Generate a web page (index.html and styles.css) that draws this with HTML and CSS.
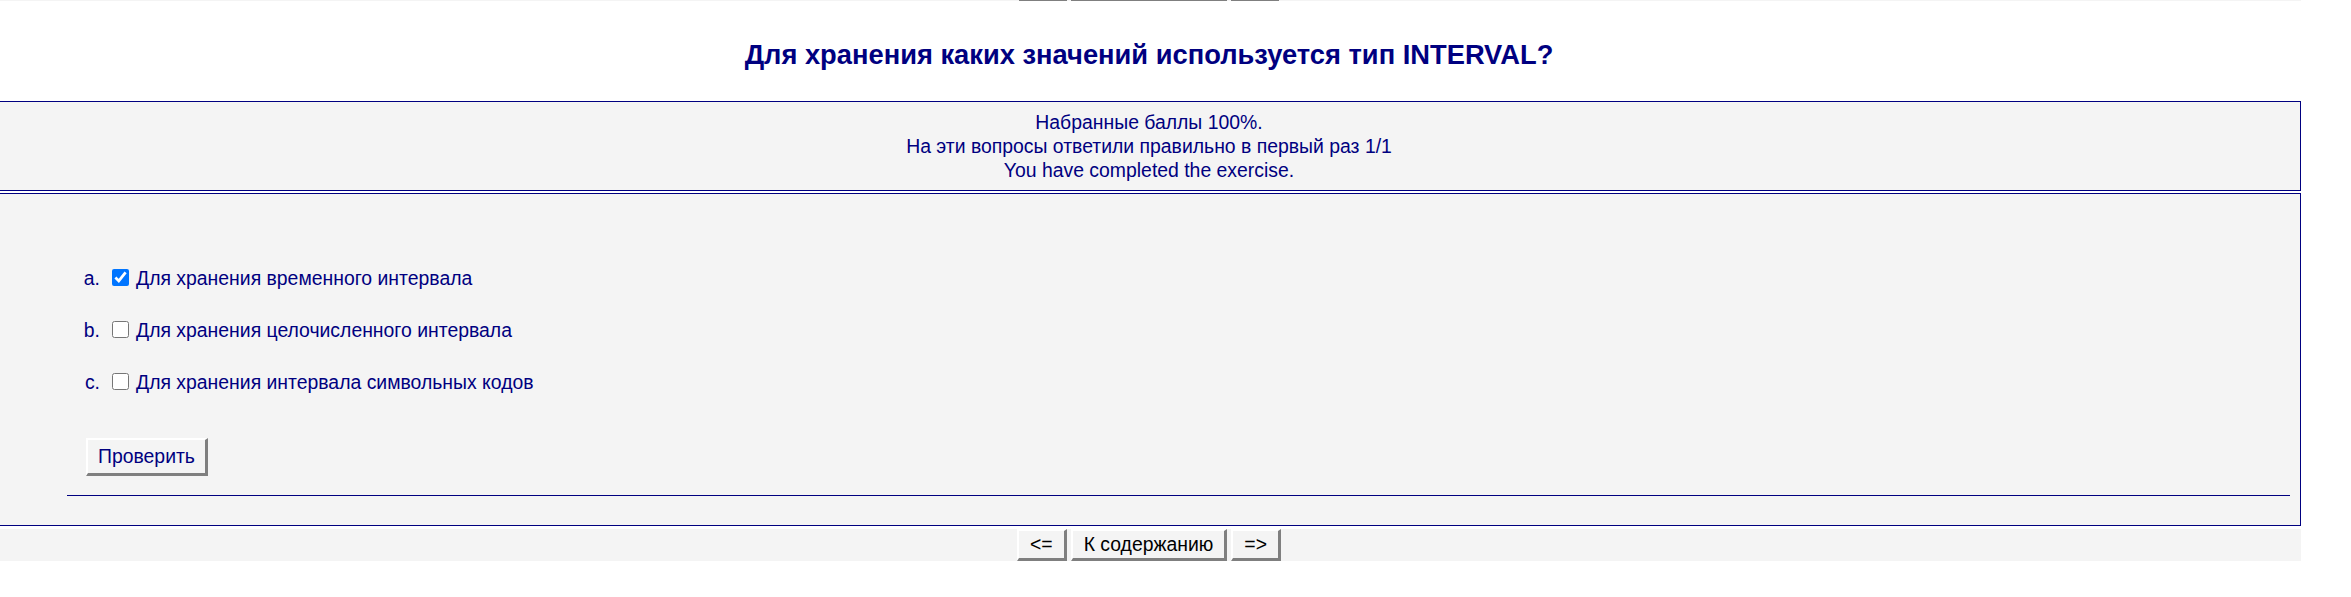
FILE: index.html
```html
<!DOCTYPE html>
<html lang="ru">
<head>
<meta charset="utf-8">
<title>INTERVAL</title>
<link rel="stylesheet" href="styles.css">
</head>
<body>
<div class="page">
  <div class="nav-top" aria-hidden="true">
    <span class="edge edge-small"></span>
    <span class="edge edge-wide"></span>
    <span class="edge edge-small"></span>
  </div>
  <h1 class="title">Для хранения каких значений используется тип INTERVAL?</h1>
  <div class="box result">
    <div>Набранные баллы 100%.</div>
    <div>На эти вопросы ответили правильно в первый раз 1/1</div>
    <div>You have completed the exercise.</div>
  </div>
  <form class="box quiz">
    <ol class="options">
      <li class="option"><span class="marker">a.</span><input type="checkbox" checked><span class="opt-text">Для хранения временного интервала</span></li>
      <li class="option"><span class="marker">b.</span><input type="checkbox"><span class="opt-text">Для хранения целочисленного интервала</span></li>
      <li class="option"><span class="marker">c.</span><input type="checkbox"><span class="opt-text">Для хранения интервала символьных кодов</span></li>
    </ol>
    <button class="check-btn" type="button">Проверить</button>
    <hr class="rule">
  </form>
  <nav class="nav">
    <button class="nav-btn" type="button">&lt;=</button>
    <button class="nav-btn" type="button">К содержанию</button>
    <button class="nav-btn" type="button">=&gt;</button>
  </nav>
</div>
</body>
</html>
```
FILE: styles.css
```css
html, body {
  margin: 0;
  padding: 0;
  background: #ffffff;
}

body {
  font-family: "Liberation Sans", Arial, sans-serif;
  font-size: 19.4px;
  color: #000080;
}

.page {
  width: 2304px;
  margin-left: -3px;
}

.nav-top {
  display: flex;
  justify-content: center;
  gap: 4px;
  height: 1px;
  background: #f4f4f4;
}

.edge {
  display: block;
  height: 1px;
  background: #7f7f7f;
}

.edge-small {
  width: 48px;
}

.edge-wide {
  width: 156px;
}

.nav {
  display: flex;
  justify-content: center;
  gap: 4px;
  height: 32px;
  margin-top: 3px;
  background: #f4f4f4;
}

.nav-btn,
.check-btn {
  font-family: inherit;
  font-size: 19.4px;
  background: #f4f4f4;
  border-style: solid;
  border-width: 2px 3px 3px 2px;
  border-color: #ffffff #7f7f7f #7f7f7f #ffffff;
  border-radius: 0;
  margin: 0;
  box-sizing: border-box;
}

.nav-btn {
  color: #000000;
  height: 32px;
  padding: 0 11px;
  line-height: 27px;
}

.title {
  margin: 38px 0 31px;
  font-size: 27.3px;
  line-height: 31px;
  font-weight: bold;
  text-align: center;
  color: #000080;
}

.box {
  background: #f4f4f4;
  border: 1px solid #000080;
}

.result {
  padding: 8px 0;
  text-align: center;
  line-height: 24px;
}

.quiz {
  margin: 2px 0 0;
  padding: 58px 10px 29px 69px;
}

.options {
  list-style: none;
  margin: 0;
  padding: 0;
}

.option {
  display: flex;
  align-items: center;
  height: 52px;
}

.marker {
  width: 33px;
  text-align: right;
  margin-right: 12px;
}

.option input {
  width: 17px;
  height: 17px;
  margin: 0 7px 2px 0;
}

.check-btn {
  display: block;
  color: #000080;
  height: 38px;
  padding: 0 10px;
  margin: 30px 0 19px 19px;
  line-height: 33px;
}

.rule {
  margin: 0;
  height: 0;
  border: 0;
  border-top: 1px solid #000080;
}
```
